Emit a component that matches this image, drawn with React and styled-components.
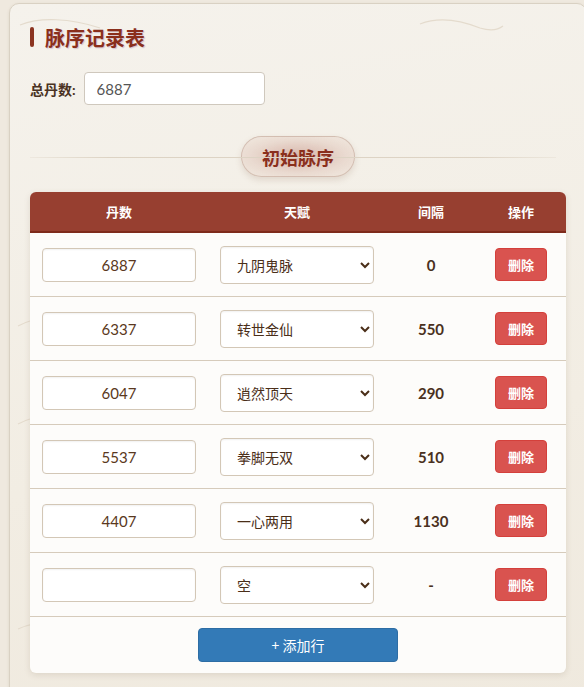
import styled, { createGlobalStyle } from "styled-components";

const GlobalStyle = createGlobalStyle`
  body {
    margin: 0;
    background: #efe9df;
    overflow: hidden;
    font-family: Lato, "Noto Sans CJK SC", sans-serif;
  }
`;

const waves = encodeURIComponent(`<svg xmlns="http://www.w3.org/2000/svg" width="576" height="720" fill="none" stroke="#e4dbcd" stroke-width="1.2">
<path d="M10 21 C 30 13, 60 14, 90 24"/>
<path d="M410 20 C 430 12, 450 16, 470 24 C 480 27, 488 26, 493 22"/>
<path d="M8 322 C 20 316, 30 313, 45 312"/>
<path d="M8 420 C 20 414, 30 411, 45 410"/>
<path d="M8 625 C 30 615, 60 616, 90 628"/>
<path d="M360 612 C 380 605, 400 606, 420 614"/>
</svg>`);

const rows = [
  { dan: "6887", talent: "九阴鬼脉", gap: "0" },
  { dan: "6337", talent: "转世金仙", gap: "550" },
  { dan: "6047", talent: "逍然顶天", gap: "290" },
  { dan: "5537", talent: "拳脚无双", gap: "510" },
  { dan: "4407", talent: "一心两用", gap: "1130" },
  { dan: "", talent: "空", gap: "-" },
];

const talents = ["空", "九阴鬼脉", "转世金仙", "逍然顶天", "拳脚无双", "一心两用"];

const App = () => {
  return (
    <Page>
      <GlobalStyle />
      <Panel>
        <Title>脉序记录表</Title>

        <TotalRow>
          <label>总丹数:</label>
          <TextInput defaultValue="6887" />
        </TotalRow>

        <Divider>
          <span>初始脉序</span>
        </Divider>

        <Table>
          <HeadRow>
            <div>丹数</div>
            <div>天赋</div>
            <div>间隔</div>
            <div>操作</div>
          </HeadRow>
          {rows.map((r, i) => (
            <Row key={i}>
              <Cell>
                <CellInput defaultValue={r.dan} />
              </Cell>
              <Cell>
                <Select defaultValue={r.talent}>
                  {talents.map((t) => (
                    <option key={t}>{t}</option>
                  ))}
                </Select>
              </Cell>
              <Gap>{r.gap}</Gap>
              <Cell $center>
                <DeleteButton>删除</DeleteButton>
              </Cell>
            </Row>
          ))}
          <Footer>
            <AddButton>+ 添加行</AddButton>
          </Footer>
        </Table>
      </Panel>
    </Page>
  );
};

const Page = styled.div`
  padding: 3px 0 0 9px;
`;

const Panel = styled.div`
  box-sizing: border-box;
  width: 578px;
  min-height: 720px;
  padding: 20px 20px 20px 20px;
  border: 1px solid #d9d1c3;
  border-radius: 10px;
  background: url("data:image/svg+xml,${waves}") no-repeat 0 0,
    linear-gradient(170deg, #f5f2ec 0%, #f2ede3 60%, #efe9de 100%);
  box-shadow: 0 1px 3px rgba(120, 100, 70, 0.15);
`;

const Title = styled.h1`
  display: flex;
  align-items: center;
  gap: 11px;
  margin: 0 0 22px;
  height: 26px;
  font-size: 20px;
  font-weight: 700;
  color: #8a2f1c;
  text-shadow: 1px 1px 1px rgba(120, 60, 120, 0.25);

  &::before {
    content: "";
    width: 4px;
    height: 20px;
    border-radius: 2px;
    background: #8b3420;
  }
`;

const TotalRow = styled.div`
  display: flex;
  align-items: center;
  gap: 8px;

  label {
    font-size: 14px;
    font-weight: 700;
    color: #4a3222;
  }
`;

const TextInput = styled.input`
  box-sizing: border-box;
  width: 181px;
  height: 33px;
  padding: 0 12px;
  border: 1px solid #cfc8bd;
  border-radius: 4px;
  background: #fff;
  font: 15px Lato, "Noto Sans CJK SC", sans-serif;
  color: #555;
  outline: none;
`;

const Divider = styled.div`
  position: relative;
  display: flex;
  justify-content: center;
  align-items: center;
  height: 41px;
  margin: 31px 0 15px;

  &::before {
    content: "";
    position: absolute;
    left: 0;
    right: 10px;
    top: 50%;
    height: 1px;
    background: linear-gradient(
      90deg,
      rgba(210, 198, 180, 0.2),
      #ddd3c4 15%,
      #ddd3c4 85%,
      rgba(210, 198, 180, 0.2)
    );
  }

  span {
    box-sizing: border-box;
    height: 41px;
    padding: 0 20px;
    display: flex;
    align-items: center;
    border: 1px solid rgba(190, 160, 145, 0.55);
    border-radius: 21px;
    background: radial-gradient(
      ellipse at center,
      rgba(205, 160, 148, 0.75) 0%,
      rgba(225, 200, 188, 0.55) 60%,
      rgba(238, 226, 215, 0.45) 100%
    );
    box-shadow: 0 3px 6px rgba(140, 100, 80, 0.18);
    font-size: 18px;
    font-weight: 700;
    color: #8a2f1c;
  }
`;

const Table = styled.div`
  border-radius: 6px;
  overflow: hidden;
  background: #fdfcfa;
  box-shadow: 0 2px 6px rgba(110, 90, 60, 0.15);
`;

const columns = "178px 178px 90px 90px";

const HeadRow = styled.div`
  display: grid;
  grid-template-columns: ${columns};
  height: 39px;
  align-items: center;
  background: #973f30;
  border-bottom: 2px solid #7e2a1b;
  color: #fff;
  font-size: 13px;
  font-weight: 700;
  text-align: center;
`;

const Row = styled.div`
  display: grid;
  grid-template-columns: ${columns};
  height: 63px;
  align-items: center;
  border-bottom: 1px solid #d6cbbb;

  &:last-of-type {
    border-bottom: 1px dashed #c9bda9;
  }
`;

const Cell = styled.div`
  padding: 0 12px;
  display: flex;
  justify-content: ${(p) => (p.$center ? "center" : "stretch")};
`;

const CellInput = styled.input`
  box-sizing: border-box;
  width: 100%;
  height: 34px;
  border: 1px solid #d3c7b6;
  border-radius: 4px;
  background: #fff;
  box-shadow: inset 0 1px 2px rgba(0, 0, 0, 0.06);
  text-align: center;
  font: 15px Lato, "Noto Sans CJK SC", sans-serif;
  color: #5a3820;
  outline: none;
`;

const Select = styled.select`
  box-sizing: border-box;
  width: 100%;
  height: 38px;
  padding: 0 8px 0 12px;
  border: 1px solid #d3c7b6;
  border-radius: 4px;
  background: #fff;
  box-shadow: inset 0 1px 2px rgba(0, 0, 0, 0.06);
  font: 14px "Noto Sans CJK SC", sans-serif;
  color: #4a2e18;
  outline: none;
`;

const Gap = styled.div`
  text-align: center;
  font-size: 15px;
  font-weight: 700;
  color: #4a3020;
`;

const DeleteButton = styled.button`
  width: 52px;
  height: 33px;
  border: 1px solid #d4403b;
  border-radius: 4px;
  background: #d9534f;
  color: #fff;
  font: 700 13px "Noto Sans CJK SC", sans-serif;
  cursor: pointer;
`;

const Footer = styled.div`
  display: flex;
  justify-content: center;
  padding: 11px 0 11px;
`;

const AddButton = styled.button`
  width: 200px;
  height: 34px;
  border: 1px solid #2e6da4;
  border-radius: 4px;
  background: #337ab7;
  color: #fff;
  font: 14px "Noto Sans CJK SC", sans-serif;
  cursor: pointer;
`;

export default App;
